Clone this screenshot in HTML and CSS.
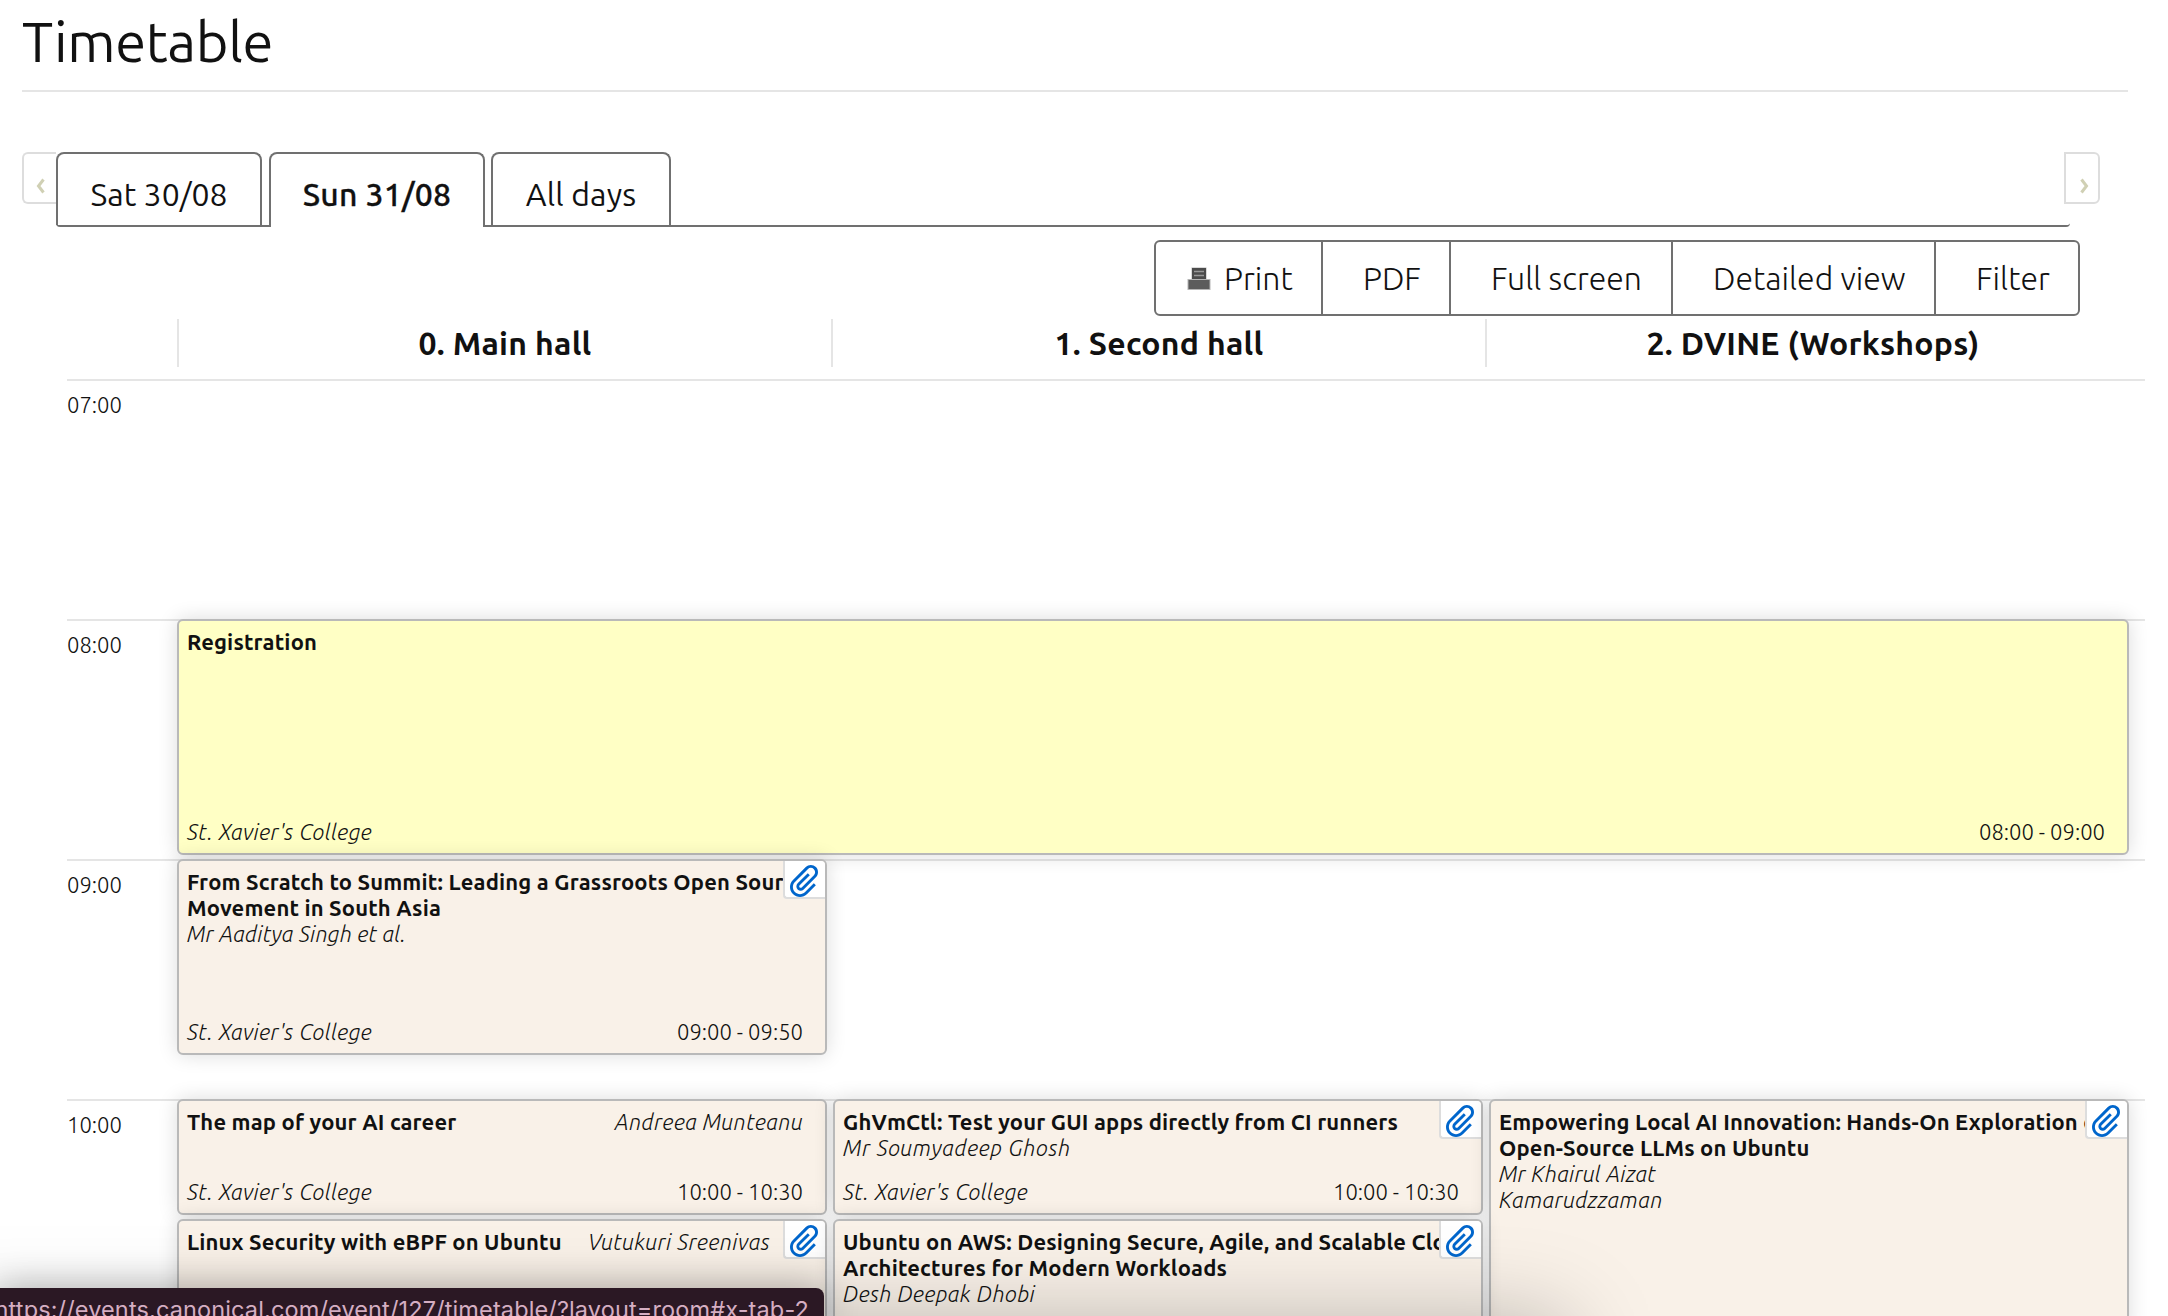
FILE: index.html
```html
<!DOCTYPE html>
<html lang="en">
<head>
<meta charset="utf-8">
<title>Timetable</title>
<link rel="stylesheet" href="styles.css">
</head>
<body>
<svg class="defs" width="0" height="0"><symbol id="clip" viewBox="0 0 32 32"><path d="M20.807 10.22l-2.030-2.029-10.15 10.148c-1.682 1.681-1.682 4.408 0 6.089s4.408 1.681 6.090 0l12.18-12.178c2.804-2.802 2.804-7.346 0-10.148-2.802-2.803-7.347-2.803-10.149 0l-12.788 12.787c-0.009 0.009-0.018 0.017-0.027 0.026-3.909 3.909-3.909 10.245 0 14.153 3.908 3.908 10.246 3.908 14.156 0 0.009-0.009 0.016-0.018 0.026-0.027l0.001 0.001 8.729-8.728-2.031-2.029-8.729 8.727c-0.009 0.008-0.018 0.018-0.026 0.026-2.784 2.783-7.312 2.783-10.096 0-2.783-2.783-2.783-7.31 0-10.093 0.010-0.009 0.019-0.018 0.028-0.026l-0.001-0.002 12.79-12.786c1.678-1.679 4.411-1.679 6.090 0s1.678 4.411 0 6.089l-12.18 12.178c-0.56 0.56-1.47 0.56-2.030 0-0.559-0.559-0.559-1.47 0-2.029l10.15-10.149z"/></symbol></svg>
<h1>Timetable</h1>
<div class="tabs">
  <span class="scroll prev"><svg width="10" height="16" viewBox="0 0 10 16"><path d="M7.5 1.5L2.5 8l5 6.5"/></svg></span>
  <nav class="tab-list">
    <a class="tab sat">Sat 30/08</a>
    <a class="tab sun active">Sun 31/08</a>
    <a class="tab all">All days</a>
  </nav>
  <span class="scroll next"><svg width="10" height="16" viewBox="0 0 10 16"><path d="M2.5 1.5L7.500 8l-5 6.5"/></svg></span>
</div>
<div class="toolbar">
  <a class="btn print"><svg width="24" height="23" viewBox="0 0 24 23"><rect x="4.500" y=".5" width="15" height="12" fill="#b5b5b5"/><rect x="5" y="1" width="14" height="11" fill="#4b4b4b"/><path d="M7 4.500h10M7 8.500h10" stroke="#989898" stroke-width="1.500"/><rect x=".5" y="12" width="23" height="11" fill="#b5b5b5"/><rect x="1.500" y="13" width="21" height="9" fill="#5c5c5c"/></svg>Print</a>
  <a class="btn pdf">PDF</a>
  <a class="btn full">Full screen</a>
  <a class="btn detail">Detailed view</a>
  <a class="btn filter">Filter</a>
</div>
<div class="rooms"><div>0. Main hall</div><div>1. Second hall</div><div>2. DVINE (Workshops)</div></div>
<main class="grid">
  <div class="hour h7">07:00</div>
  <div class="hour h8">08:00</div>
  <div class="hour h9">09:00</div>
  <div class="hour h10">10:00</div>
  <article class="card registration">
    <div class="top"><b>Registration</b></div>
    <div class="bottom"><i>St. Xavier's College</i><span>08:00 - 09:00</span></div>
  </article>
  <article class="card scratch">
    <div><b>From Scratch to Summit: Leading a Grassroots Open Source<br>Movement in South Asia</b><br><i class="tight">Mr Aaditya Singh et al.</i></div>
    <div class="bottom"><i>St. Xavier's College</i><span>09:00 - 09:50</span></div>
    <span class="clip"><svg><use href="#clip"/></svg></span>
  </article>
  <article class="card map">
    <div class="top"><b>The map of your AI career</b><i>Andreea Munteanu</i></div>
    <div class="bottom"><i>St. Xavier's College</i><span>10:00 - 10:30</span></div>
  </article>
  <article class="card ghvm">
    <div><b>GhVmCtl: Test your GUI apps directly from CI runners</b><br><i class="wide">Mr Soumyadeep Ghosh</i></div>
    <div class="bottom"><i>St. Xavier's College</i><span>10:00 - 10:30</span></div>
    <span class="clip"><svg><use href="#clip"/></svg></span>
  </article>
  <article class="card llm">
    <div><b>Empowering Local AI Innovation: Hands-On Exploration of<br>Open-Source LLMs on Ubuntu</b><br><i class="tight">Mr Khairul Aizat</i><br><i>Kamarudzzaman</i></div>
    <span class="clip"><svg><use href="#clip"/></svg></span>
  </article>
  <article class="card linux">
    <div class="top with-clip"><b>Linux Security with eBPF on Ubuntu</b><i>Vutukuri Sreenivas</i></div>
    <span class="clip"><svg><use href="#clip"/></svg></span>
  </article>
  <article class="card aws">
    <div><b>Ubuntu on AWS: Designing Secure, Agile, and Scalable Cloud<br>Architectures for Modern Workloads</b><br><i>Desh Deepak Dhobi</i></div>
    <span class="clip"><svg><use href="#clip"/></svg></span>
  </article>
</main>
<div class="glow"></div>
<div class="status">https://events.canonical.com/event/127/timetable/?layout=room#x-tab-2</div>
</body>
</html>
```
FILE: styles.css
```css
* { box-sizing: border-box; }
html { height: 100%; overflow: hidden; }
body {
  position: relative;
  height: 1316px;
  margin: 0;
  overflow: hidden;
  background: #fff;
  color: #111;
  font-family: Ubuntu, "Open Sans", sans-serif;
  font-size: 22px;
  font-weight: 300;
}
.defs { display: block; }
h1 {
  height: 92px;
  margin: 0 40px 0 22px;
  padding-top: 10px;
  border-bottom: 2px solid #e5e5e5;
  font-size: 56px;
  font-weight: 400;
  letter-spacing: -.35px;
  line-height: 64px;
}
.tabs {
  display: flex;
  width: 2078px;
  height: 75px;
  margin: 60px 0 0 22px;
}
.scroll {
  display: flex;
  justify-content: center;
  align-items: center;
  width: 36px;
  height: 52px;
  padding-top: 15px;
  border: 2px solid #ddd;
}
.scroll path { fill: none; stroke: #d0d0b4; stroke-width: 3; }
.prev { width: 34px; padding-left: 2px; border-right: 0; border-radius: 6px 0 0 6px; }
.next { padding-left: 3px; border-radius: 0 6px 6px 0; margin-left: -6px; }
.tab-list {
  display: flex;
  gap: 7px;
  width: 2014px;
  border-bottom: 2px solid #707070;
  border-radius: 0 0 4px 4px;
}
.tab {
  height: 73px;
  padding-top: 22px;
  border: 2px solid #707070;
  border-bottom: 0;
  border-radius: 8px 8px 0 0;
  font-size: 32px;
  font-weight: 400;
  line-height: 36px;
  text-align: center;
}
.sat { width: 206px; }
.sun { width: 216px; }
.all { width: 180px; margin-left: -1px; letter-spacing: .15px; }
.active { height: 75px; background: #fff; font-weight: 500; letter-spacing: .25px; -webkit-text-stroke: .3px #111; }
.toolbar {
  display: flex;
  width: 926px;
  height: 76px;
  margin: 13px 0 0 1154px;
  border: 2px solid #707070;
  border-radius: 6px;
  font-size: 32px;
  line-height: 72px;
}
.btn { border-right: 2px solid #707070; padding-left: 40px; }
.btn svg { margin-right: 13px; }
.print { width: 167px; padding-left: 31px; }
.pdf { width: 128px; }
.full { width: 222px; }
.detail { width: 263px; }
.filter { border: 0; }
.rooms {
  display: grid;
  grid-template-columns: repeat(3, 654px);
  height: 48px;
  margin: 3px 0 12px 177px;
  font-size: 32px;
  font-weight: 700;
  letter-spacing: .25px;
  line-height: 48px;
  text-align: center;
}
.rooms div { border-left: 2px solid #e5e5e5; }
.grid {
  display: grid;
  grid-template-columns: 110px 656px 656px 640px 16px;
  grid-template-rows: repeat(24, 40px);
  margin-left: 67px;
  line-height: 26px;
}
.hour { grid-column: 1 / -1; border-top: 2px solid #e5e5e5; padding-top: 11px; }
.h7 { grid-row: 1; }
.h8 { grid-row: 7; }
.h9 { grid-row: 13; }
.h10 { grid-row: 19; }
.card {
  position: relative;
  display: flex;
  flex-direction: column;
  justify-content: space-between;
  margin: 0 6px 4px 0;
  padding: 8px 22px 8px 8px;
  overflow: hidden;
  border: 2px solid #b9b9b9;
  border-radius: 6px;
  background: #f9f1e8;
  box-shadow: 0 0 20px rgba(0, 0, 0, .14);
  white-space: nowrap;
}
.card b { font-weight: 700; letter-spacing: .16px; }
.card i { letter-spacing: .43px; }
.card .tight { letter-spacing: .22px; }
.card .wide { letter-spacing: .68px; }
.top, .bottom { display: flex; justify-content: space-between; }
.with-clip { padding-right: 33px; }
.registration { grid-area: 7 / 2 / 13 / 5; margin-right: 0; background: #ffffc5; }
.scratch { grid-area: 13 / 2 / 18 / 3; }
.map { grid-area: 19 / 2 / 22 / 3; }
.ghvm { grid-area: 19 / 3 / 22 / 4; }
.llm { grid-area: 19 / 4 / 25 / 5; margin-right: 0; }
.linux { grid-area: 22 / 2 / 25 / 3; }
.aws { grid-area: 22 / 3 / 25 / 4; }
.clip {
  position: absolute;
  top: 0;
  right: 0;
  width: 42px;
  height: 38px;
  padding: 4px 0 0 4px;
  border: solid #ddd;
  border-width: 0 0 2px 2px;
  border-radius: 0 0 0 4px;
  background: #fff;
}
.clip svg { display: block; width: 32px; height: 32px; fill: #06c; }
.glow {
  position: absolute;
  left: -60px;
  top: 1326px;
  width: 1620px;
  height: 100px;
  box-shadow: 0 0 90px 6px rgba(0, 0, 0, .26);
}
.status {
  position: absolute;
  left: 0;
  top: 1288px;
  display: flex;
  justify-content: flex-end;
  width: 824px;
  height: 28px;
  padding: 7px 15px 0 0;
  overflow: hidden;
  border-radius: 0 8px 0 0;
  background: #2b1824;
  box-shadow: 0 0 36px rgba(0, 0, 0, .3);
  color: #d5aec2;
  font: 400 23.500px/30px Inter, sans-serif;
  letter-spacing: .13px;
  white-space: nowrap;
}
```
